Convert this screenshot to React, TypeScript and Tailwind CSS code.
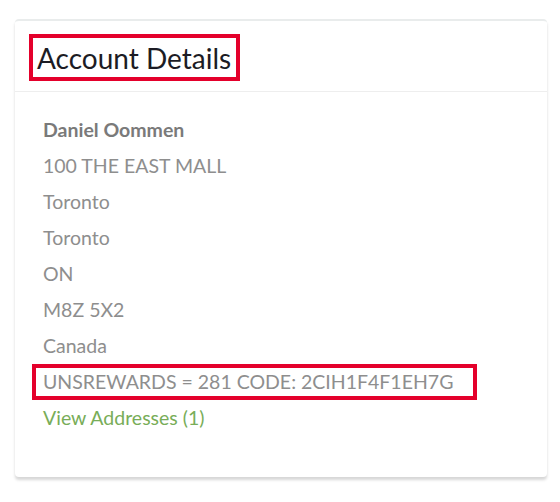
import React from 'react';

const lines = ['100 THE EAST MALL', 'Toronto', 'Toronto', 'ON', 'M8Z 5X2', 'Canada'];

const App: React.FC = () => {
  return (
    <div className="min-h-[502px] w-[560px] bg-white pt-[19px] pl-[15px] font-['Lato','Liberation_Sans',sans-serif]">
      <div className="w-[532px] rounded-[4px] border-t-2 border-[#e9ecec] bg-white shadow-[0_3px_3px_rgba(0,0,0,0.16)]">
        {/* Header */}
        <div className="border-b border-[#eeeeee] pl-[22px] pt-[20px] pb-[16px]">
          <div className="relative inline-block">
            <h2 className="text-[28px] leading-[34px] text-[#1c1c24]">Account Details</h2>
            {/* annotation box */}
            <span className="pointer-events-none absolute -left-[8px] -right-[9px] -top-[7px] -bottom-[6px] border-4 border-[#e4002b]" />
          </div>
        </div>

        {/* Body */}
        <div className="pl-[28px] pt-[20px] pb-[41px] text-[19.5px] leading-[36px] text-[#8e8e8e]">
          <div className="font-bold text-[#7a7a7a]">Daniel Oommen</div>
          {lines.map((l, i) => (
            <div key={i}>{l}</div>
          ))}
          <div>
            <span className="relative inline-block">
              UNSREWARDS = 281 CODE: 2CIH1F4F1EH7G
              <span className="pointer-events-none absolute -left-[11px] -right-[24px] top-0 bottom-0 border-4 border-[#e4002b]" />
            </span>
          </div>
          <div className="text-[#78ad58]">View Addresses (1)</div>
        </div>
      </div>
    </div>
  );
};

export default App;
